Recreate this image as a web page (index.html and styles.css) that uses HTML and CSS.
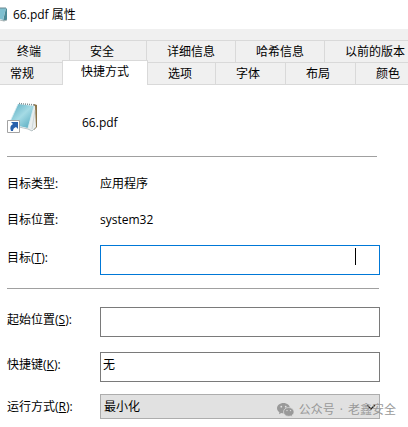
FILE: index.html
```html
<!DOCTYPE html>
<html lang="zh-CN">
<head>
<meta charset="utf-8">
<title>66.pdf 属性</title>
<link rel="stylesheet" href="styles.css">
</head>
<body>
<header class="titlebar">
  <svg class="title-icon" viewBox="0 0 8 16" aria-hidden="true">
    <path d="M0 1h6l-3 12-3-1z" fill="#7fc0d0"/>
    <path d="M0 1h6" stroke="#6d8890" fill="none"/>
    <path d="M6 1l1 1v11l-4 1z" fill="#4b8996"/>
    <path d="M0 13l4 1 3-1" stroke="#a9b4b6" fill="none"/>
  </svg>
  <h1 class="title">66.pdf 属性</h1>
</header>
<nav class="tabs" role="tablist">
  <div class="tab-row">
    <button class="tab first-back" role="tab">终端</button>
    <button class="tab second-back" role="tab">安全</button>
    <button class="tab wide" role="tab">详细信息</button>
    <button class="tab wide" role="tab">哈希信息</button>
    <button class="tab widest" role="tab">以前的版本</button>
  </div>
  <div class="tab-row">
    <button class="tab first-front" role="tab">常规</button>
    <button class="tab active" role="tab" aria-selected="true">快捷方式</button>
    <button class="tab narrow" role="tab">选项</button>
    <button class="tab" role="tab">字体</button>
    <button class="tab" role="tab">布局</button>
    <button class="tab" role="tab">颜色</button>
  </div>
</nav>
<main class="panel">
  <section class="file">
    <svg class="file-icon" viewBox="0 0 32 32" aria-hidden="true">
      <defs>
        <linearGradient id="cover" x1="0" y1="0" x2="1" y2="1">
          <stop offset="0" stop-color="#4fa6bd"/>
          <stop offset=".5" stop-color="#a5dbe5"/>
          <stop offset="1" stop-color="#4ba4bb"/>
        </linearGradient>
      </defs>
      <path d="M27 2l3 1v22l-3 3z" fill="#8b7448"/>
      <path d="M26 3l2 1 1 21-4 4-6-3z" fill="#e9eeee"/>
      <path d="M28 8l-3 19" stroke="#b9c4c6" stroke-width=".6" fill="none"/>
      <path d="M11 2l16 2-6 22-19-4z" fill="url(#cover)"/>
      <path d="M11 2L2 22M27 4l-6 22" stroke="#d8eef2" stroke-width=".8" fill="none"/>
      <path d="M12 1.500l16 1.500" stroke="#7d8c90" stroke-width="1.500" stroke-dasharray="1 1" fill="none"/>
      <path d="M12 25l9 2 4 2 3-3" stroke="#a7b5b9" stroke-width=".8" fill="none"/>
      <path d="M.5 18.500h12v12h-12z" fill="#fff" stroke="#a3a3a3"/>
      <path d="M4 20h7v7l-2-2q-3 1-3 4H4q-2-5 2-7z" fill="#2860ac"/>
    </svg>
    <span>66.pdf</span>
  </section>
  <hr>
  <dl class="facts">
    <dt>目标类型:</dt><dd>应用程序</dd>
    <dt>目标位置:</dt><dd>system32</dd>
  </dl>
  <div class="field target">
    <label for="target">目标(<u>T</u>):</label>
    <div class="control">
      <input id="target" class="focused" type="text">
      <span class="caret"></span>
    </div>
  </div>
  <hr class="lower">
  <div class="field start">
    <label for="start">起始位置(<u>S</u>):</label>
    <input id="start" type="text">
  </div>
  <div class="field">
    <label for="hotkey">快捷键(<u>K</u>):</label>
    <input id="hotkey" type="text" value="无">
  </div>
  <div class="field run">
    <label for="run">运行方式(<u>R</u>):</label>
    <div class="control">
      <select id="run"><option>最小化</option></select>
      <svg class="chevron" viewBox="0 0 10 6" aria-hidden="true"><path d="M1 1l4 4 4-4" fill="none" stroke="#222" stroke-width="1.300"/></svg>
      <div class="watermark">
        <svg class="chat" viewBox="0 0 17 14" aria-hidden="true">
          <path d="M6.500 0C2.900 0 0 2.300 0 5.200c0 1.700 1 3.100 2.400 4L2 11.200l2.200-1.200q1.100.3 2.300.3C10 10.300 13 8 13 5.200S10 0 6.500 0z" fill="#999"/>
          <path d="M11.700 4.500c-3 0-5.200 2-5.200 4.400s2.200 4.400 5.200 4.400q1 0 1.900-.3l1.700 1-.4-1.700c1.300-.8 2.100-2 2.100-3.400 0-2.400-2.300-4.400-5.300-4.400z" fill="#999" stroke="#e1e1e1" stroke-width=".7"/>
          <g fill="#e1e1e1"><circle cx="4.300" cy="3.700" r=".9"/><circle cx="8.700" cy="3.700" r=".9"/><circle cx="10" cy="7.600" r=".7"/><circle cx="13.500" cy="7.600" r=".7"/></g>
        </svg>
        <span>公众号</span><span>·</span><span>老鑫安全</span>
      </div>
    </div>
  </div>
</main>
</body>
</html>
```
FILE: styles.css
```css
* {
  box-sizing: border-box;
}

body {
  margin: 0;
  background: #fff;
  color: #000;
  font: 12px/16px "Open Sans", "Noto Sans CJK SC", sans-serif;
  overflow: hidden;
}

button,
input,
select {
  font: inherit;
  color: inherit;
  border-radius: 0;
}

.titlebar {
  display: flex;
  align-items: center;
  gap: 5px;
  height: 29px;
}

.title-icon {
  width: 8px;
  height: 16px;
}

.title {
  margin: 0;
  font-size: 12px;
  font-weight: 400;
}

.tabs {
  padding-top: 11px;
  background: #f0f0f0;
}

.tab-row {
  display: flex;
  height: 22px;
  border-top: 1px solid #d9d9d9;
}

.tab-row:last-child {
  height: 23px;
  border-bottom: 1px solid #d9d9d9;
}

.tab {
  flex: none;
  width: 70px;
  padding: 0 0 0 20px;
  border: 0;
  border-right: 1px solid #d9d9d9;
  background: #f0f0f0;
  text-align: left;
  white-space: nowrap;
}

.first-back {
  width: 70px;
  padding-left: 17px;
}

.second-back {
  width: 77px;
}

.wide {
  width: 89px;
}

.widest {
  width: 96px;
}

.narrow {
  width: 68px;
}

.first-front {
  width: 62px;
  padding-left: 10px;
  border-right: 0;
}

.active {
  width: 86px;
  margin: -3px 0 -1px;
  padding: 0 0 2px 18px;
  border: 1px solid #d9d9d9;
  border-bottom: 0;
  background: #fff;
}

.panel {
  padding: 17px 28px 8px 7px;
}

.file {
  display: flex;
  align-items: center;
  gap: 43px;
  height: 40px;
}

.file-icon {
  align-self: flex-start;
  width: 32px;
  height: 32px;
}

.file span {
  padding-top: 2px;
}

hr {
  height: 1px;
  margin: 14px 3px 0 0;
  border: 0;
  background: #a0a0a0;
}

.lower {
  margin: 13px 1px 0 0;
}

.facts {
  display: grid;
  grid-template-columns: 93px 1fr;
  row-gap: 20px;
  margin: 19px 0 17px;
}

.facts dd {
  margin: 0;
}

.field {
  display: grid;
  grid-template-columns: 93px 1fr;
  align-items: center;
  margin-top: 15px;
}

.field label {
  padding-bottom: 4px;
}

.start {
  margin-top: 18px;
}

.run {
  margin-top: 12px;
}

.run label {
  padding: 0;
}

.control {
  display: grid;
  position: relative;
}

input {
  width: 100%;
  height: 30px;
  padding: 0 2px 6px;
  border: 1px solid #7a7a7a;
  background: #fff;
  outline: 0;
}

.focused {
  border-color: #0078d7;
}

.caret {
  position: absolute;
  top: 3px;
  right: 24px;
  width: 1px;
  height: 17px;
  background: #000;
}

select {
  width: 100%;
  height: 25px;
  padding: 0 3px;
  border: 1px solid #adadad;
  background: #e1e1e1;
  appearance: none;
}

.chevron {
  position: absolute;
  top: 10px;
  right: 4px;
  width: 10px;
  height: 6px;
}

.watermark {
  display: flex;
  align-items: center;
  gap: 5px;
  position: absolute;
  top: 8px;
  right: -16px;
  color: #999;
  white-space: nowrap;
}

.chat {
  width: 17px;
  height: 14px;
}
```
